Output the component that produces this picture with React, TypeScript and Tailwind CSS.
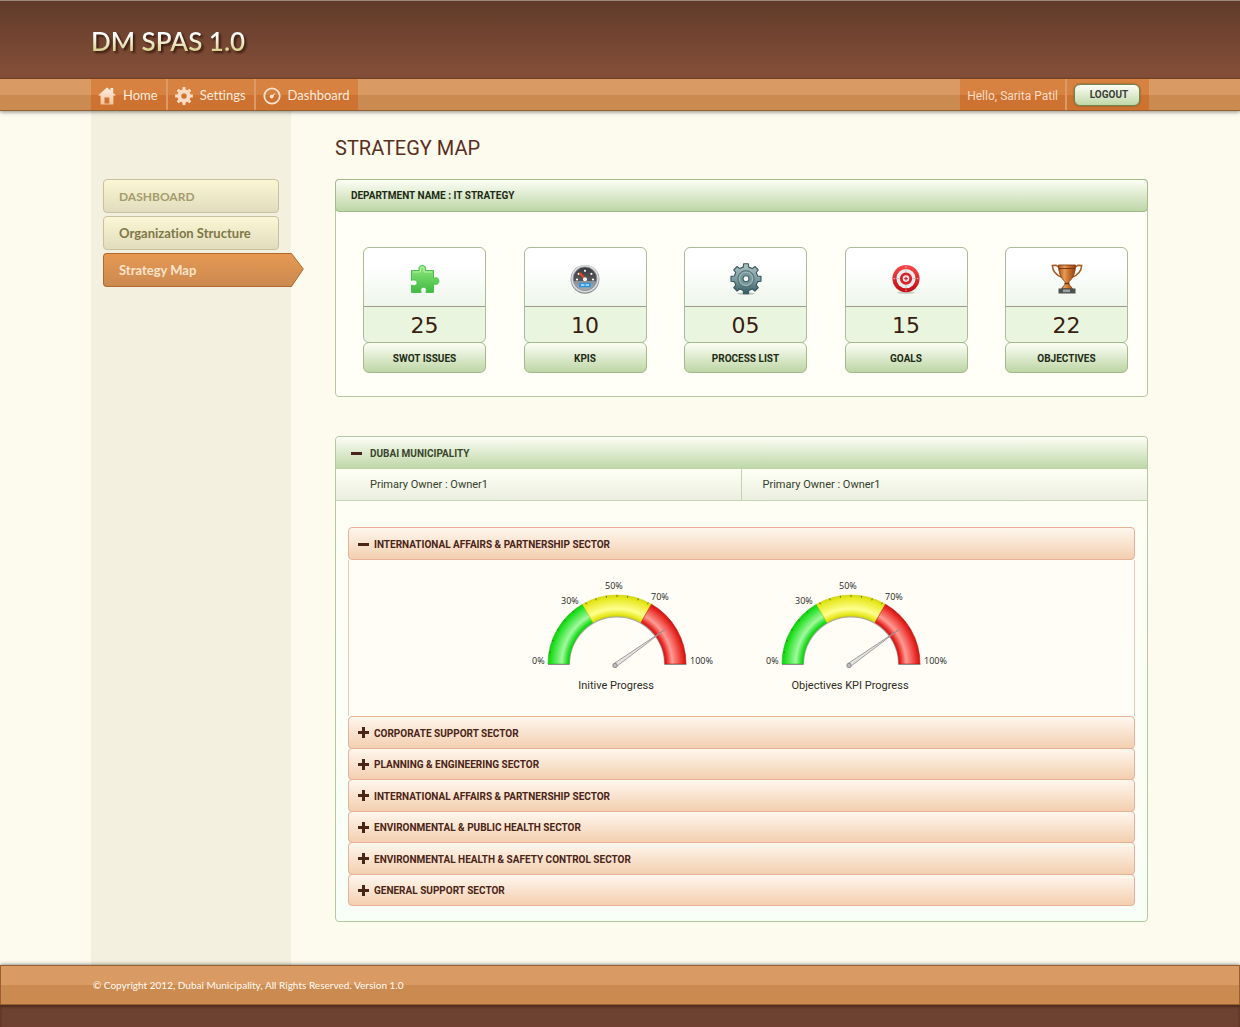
import { useState, type ReactNode } from 'react';

const stats = [
  { label: 'SWOT ISSUES', value: '25', icon: <PuzzleIcon /> },
  { label: 'KPIS', value: '10', icon: <DialIcon /> },
  { label: 'PROCESS LIST', value: '05', icon: <CogIcon /> },
  { label: 'GOALS', value: '15', icon: <TargetIcon /> },
  { label: 'OBJECTIVES', value: '22', icon: <TrophyIcon /> },
];

const sectors = [
  'CORPORATE SUPPORT SECTOR',
  'PLANNING & ENGINEERING SECTOR',
  'INTERNATIONAL AFFAIRS & PARTNERSHIP SECTOR',
  'ENVIRONMENTAL & PUBLIC HEALTH SECTOR',
  'ENVIRONMENTAL HEALTH & SAFETY CONTROL SECTOR',
  'GENERAL SUPPORT SECTOR',
];

function gearPath(cx: number, cy: number, teeth: number, outer: number, inner: number) {
  const step = (Math.PI * 2) / teeth;
  const pts: string[] = [];
  for (let i = 0; i < teeth; i++) {
    const a = i * step - Math.PI / 2;
    const corners = [
      [inner, -0.3],
      [outer, -0.2],
      [outer, 0.2],
      [inner, 0.3],
    ];
    corners.forEach(([r, t]) => {
      const x = cx + r * Math.cos(a + t * step);
      const y = cy + r * Math.sin(a + t * step);
      pts.push(`${x.toFixed(2)} ${y.toFixed(2)}`);
    });
  }
  return `M${pts.join('L')}Z`;
}

function HomeIcon() {
  return (
    <svg width="18" height="18" viewBox="0 0 18 18" aria-hidden="true">
      <defs>
        <linearGradient id="home" x1="0" y1="0" x2="0" y2="1">
          <stop offset="0" stopColor="#fff0e4" />
          <stop offset="1" stopColor="#f3c09a" />
        </linearGradient>
      </defs>
      <path
        d="M9 0.5L0 8.6h2.6V17.5h12.8V8.6H18l-2.8-2.5V1h-2.8v2.5zM6.5 10.5h4.8v6H6.5z"
        fill="url(#home)"
        fillRule="evenodd"
      />
    </svg>
  );
}

function SettingsIcon() {
  return (
    <svg width="18" height="18" viewBox="0 0 18 18" aria-hidden="true">
      <path
        d={`${gearPath(9, 9, 8, 9, 6.6)}M9 6.3a2.7 2.7 0 1 0 0 5.4a2.7 2.7 0 1 0 0-5.4Z`}
        fill="#fadcc4"
        fillRule="evenodd"
      />
    </svg>
  );
}

function MeterIcon() {
  return (
    <svg width="18" height="18" viewBox="0 0 18 18" aria-hidden="true">
      <circle cx="9" cy="9" r="7.7" fill="none" stroke="#fbe3d0" strokeWidth="1.8" />
      <circle cx="8.6" cy="9.6" r="1.9" fill="#fbe3d0" />
      <path d="M8.2 8.8L12.6 5.8L9.6 10.4Z" fill="#fbe3d0" />
    </svg>
  );
}

function PuzzleIcon() {
  return (
    <svg width="30" height="30" viewBox="0 0 30 30" aria-hidden="true">
      <defs>
        <linearGradient id="puzzle" x1="0" y1="0" x2="0" y2="1">
          <stop offset="0" stopColor="#8fe97d" />
          <stop offset="1" stopColor="#3fba41" />
        </linearGradient>
      </defs>
      <path
        d="M1.5 6.5H9V5c-1.3-3.6 6.5-5.4 6.6-.7L15.4 6.5H23.5v7.6h1.3c4.8-2 5.6 6.3 1.2 6.2l-2.5-.4v8.6h-7.6c.9-2.6.6-5.3-2.3-5.2c-3 .1-3.4 2.5-2.4 5.2H1.5v-7.4c2.6.8 5.7.4 5.6-2.5c-.1-2.8-3-3.1-5.6-2.2z"
        fill="url(#puzzle)"
        stroke="#4cc04c"
        strokeWidth="1"
      />
      <path d="M3 8h7.4V5.2C10.4 2.4 14 2.6 14 4.6V8h8" fill="none" stroke="#c4f7b8" strokeWidth="0.8" />
    </svg>
  );
}

function DialIcon() {
  const marks = [
    [7, 15.5],
    [8.6, 9.8],
    [15, 6.8],
    [21.4, 9.8],
    [23, 15.5],
  ];
  return (
    <svg width="30" height="30" viewBox="0 0 30 30" aria-hidden="true">
      <defs>
        <linearGradient id="dial" x1="0" y1="0" x2="0" y2="1">
          <stop offset="0" stopColor="#38393d" />
          <stop offset="0.6" stopColor="#58595e" />
          <stop offset="0.61" stopColor="#8d8f95" />
          <stop offset="1" stopColor="#a9abb0" />
        </linearGradient>
      </defs>
      <circle cx="15" cy="15.3" r="14.4" fill="#8b8c90" />
      <circle cx="15" cy="14.8" r="13.8" fill="#dcdde0" />
      <circle cx="15" cy="14.8" r="11.8" fill="url(#dial)" stroke="#85878c" strokeWidth="0.8" />
      {marks.map(([x, y]) => (
        <circle key={x} cx={x} cy={y} r="1.1" fill="#fff" />
      ))}
      <path d="M10 9.2L15 14.6" stroke="#f0431d" strokeWidth="2" strokeLinecap="round" />
      <circle cx="15" cy="15.2" r="2" fill="#fff" />
      <rect x="9" y="18.7" width="12" height="4.6" rx="0.5" fill="#2e95e6" />
      <path d="M11 21h3.4M15.6 21H19" stroke="#bfe6ff" strokeWidth="1.6" />
    </svg>
  );
}

function CogIcon() {
  return (
    <svg width="32" height="32" viewBox="0 0 32 32" aria-hidden="true">
      <defs>
        <linearGradient id="cog" x1="0" y1="0" x2="0" y2="1">
          <stop offset="0" stopColor="#adc0c2" />
          <stop offset="0.55" stopColor="#7d9b9f" />
          <stop offset="1" stopColor="#2f5960" />
        </linearGradient>
      </defs>
      <ellipse cx="16" cy="30.6" rx="9" ry="1.2" fill="#b9c4bf" />
      <path
        d={gearPath(16, 15.8, 8, 15.2, 12)}
        fill="url(#cog)"
        stroke="#36575c"
        strokeWidth="1.1"
        strokeLinejoin="round"
      />
      <circle cx="16" cy="15.8" r="8.2" fill="#78979b" stroke="#4a6c71" strokeWidth="0.9" />
      <circle cx="16" cy="15.8" r="6.6" fill="none" stroke="#a5bbbd" strokeWidth="1" />
      <circle cx="16" cy="15.8" r="3" fill="#fff" stroke="#3d6267" strokeWidth="1.1" />
    </svg>
  );
}

function TargetIcon() {
  return (
    <svg width="30" height="30" viewBox="0 0 30 30" aria-hidden="true">
      <defs>
        <linearGradient id="target" x1="0" y1="0" x2="0" y2="1">
          <stop offset="0" stopColor="#f9494a" />
          <stop offset="1" stopColor="#bd0d14" />
        </linearGradient>
      </defs>
      <ellipse cx="15" cy="28.6" rx="9" ry="1.2" fill="#c5cac2" />
      <circle cx="15" cy="14.6" r="13.6" fill="url(#target)" />
      <circle cx="15" cy="14.6" r="9.6" fill="#e9ecec" />
      <circle cx="15" cy="14.6" r="4.7" fill="none" stroke="#d92328" strokeWidth="2.8" />
      <path d="M15 12.8v3.6M13.2 14.6h3.6" stroke="#d92328" strokeWidth="1.2" />
      <path
        d="M15 5.6v2.8M15 20.8v2.8M6 14.6h2.8M21.2 14.6H24"
        stroke="#b9bcbc"
        strokeWidth="0.8"
      />
      <path d="M15 2.2v1.6M15 25.6v1.6M2.6 14.6h1.6M25.8 14.6h1.6" stroke="#ffb5b0" strokeWidth="1" />
    </svg>
  );
}

function TrophyIcon() {
  return (
    <svg width="32" height="30" viewBox="0 0 32 30" aria-hidden="true">
      <defs>
        <linearGradient id="cup" x1="0" y1="0" x2="1" y2="0">
          <stop offset="0" stopColor="#a9581d" />
          <stop offset="0.35" stopColor="#e79a55" />
          <stop offset="0.6" stopColor="#c9712b" />
          <stop offset="1" stopColor="#8e4413" />
        </linearGradient>
      </defs>
      <path
        d="M8 3.4L5 1.2L1.3 1.4c.3 4.8 3.6 9.6 9.6 12M24 3.4l3-2.2l3.7.2c-.3 4.8-3.6 9.6-9.6 12"
        fill="none"
        stroke="#a65a24"
        strokeWidth="1.5"
      />
      <path
        d="M7.5 1h17c0 7.2-2.3 13-6.6 16.8l-.4 2l4 4.7h-11l4-4.7l-.4-2C9.8 14 7.5 8.2 7.5 1z"
        fill="url(#cup)"
        stroke="#843f12"
        strokeWidth="0.9"
      />
      <path d="M8 4.5h16" stroke="#7c3a10" strokeWidth="1" />
      <path d="M13.5 19.5h5" stroke="#6d300b" strokeWidth="1.4" />
      <rect x="7.5" y="24.5" width="17" height="5" fill="#4c5350" />
      <rect x="12" y="25.5" width="7" height="2.6" fill="#9aa5a2" />
    </svg>
  );
}

const CX = 85;
const CY = 86;

function polar(r: number, deg: number) {
  const a = (deg * Math.PI) / 180;
  return [CX + r * Math.cos(a), CY - r * Math.sin(a)];
}

function band(from: number, to: number) {
  const [x1, y1] = polar(69, from);
  const [x2, y2] = polar(69, to);
  const [x3, y3] = polar(48, to);
  const [x4, y4] = polar(48, from);
  return `M${x1} ${y1}A69 69 0 0 1 ${x2} ${y2}L${x3} ${y3}A48 48 0 0 0 ${x4} ${y4}Z`;
}

function Gauge({ id, title }: { id: string; title: string }) {
  const bands = [
    { name: 'green', from: 180, to: 120, edge: '#14c914', mid: '#1fe01f', light: '#a4f8a0' },
    { name: 'yellow', from: 120, to: 60, edge: '#d3d60c', mid: '#e6e81c', light: '#ffff8e' },
    { name: 'red', from: 60, to: 0, edge: '#cb1414', mid: '#e8241f', light: '#ff9c94' },
  ];
  const ticks = [170, 160, 150, 140, 130, 117, 108, 99, 90, 81, 72, 63, 50, 40, 30, 20, 10];

  return (
    <figure className="w-[184px]">
      <svg width="184" height="96" viewBox="0 0 184 96" role="img" aria-label={title}>
        <defs>
          {bands.map((b) => (
            <radialGradient
              key={b.name}
              id={`${id}-${b.name}`}
              gradientUnits="userSpaceOnUse"
              cx={CX}
              cy={CY}
              r="69"
            >
              <stop offset="0.69" stopColor={b.edge} />
              <stop offset="0.72" stopColor={b.mid} />
              <stop offset="0.8" stopColor={b.light} />
              <stop offset="0.96" stopColor={b.mid} />
              <stop offset="1" stopColor={b.edge} />
            </radialGradient>
          ))}
        </defs>
        <path d="M37 86.5A48 48 0 0 1 133 86.5" fill="none" stroke="#a9a9a4" strokeWidth="2" />
        {bands.map((b) => (
          <path
            key={b.name}
            d={band(b.from, b.to)}
            fill={`url(#${id}-${b.name})`}
            stroke={b.edge}
            strokeWidth="0.6"
          />
        ))}
        {ticks.map((t) => {
          const [x1, y1] = polar(69, t);
          const [x2, y2] = polar(67, t);
          return <line key={t} x1={x1} y1={y1} x2={x2} y2={y2} stroke="#4c5a1c" strokeWidth="0.8" />;
        })}
        <path d="M16 86.5h21.5M132.5 86.5h22" stroke="#8d8d88" strokeWidth="1" />
        <path d="M82 85.5L133 51.5L84.5 88.5Z" fill="#e2e2e0" stroke="#8a8a8a" strokeWidth="0.8" />
        <circle cx="83" cy="87.5" r="2.2" fill="#bcbcbc" stroke="#7c7c7c" strokeWidth="0.8" />
        <g fontFamily="'Open Sans', sans-serif" fontSize="9" fill="#1d1d1d">
          <text x="0" y="86">0%</text>
          <text x="29" y="26">30%</text>
          <text x="73" y="11">50%</text>
          <text x="119" y="22">70%</text>
          <text x="158" y="86">100%</text>
        </g>
      </svg>
      <figcaption className="mt-1 pr-4 text-center text-[11px] leading-4 whitespace-nowrap text-[#2b2b22]">
        {title}
      </figcaption>
    </figure>
  );
}

function ToggleIcon({ open }: { open: boolean }) {
  return (
    <svg width="11" height="11" viewBox="0 0 11 11" className="shrink-0" aria-hidden="true">
      <path d={open ? 'M0 4h11v3H0z' : 'M0 4h4V0h3v4h4v3H7v4H4V7H0z'} fill="#4a2416" />
    </svg>
  );
}

function SectorHeader({ title, open, onClick }: { title: string; open: boolean; onClick?: () => void }) {
  return (
    <button
      type="button"
      aria-expanded={open}
      onClick={onClick}
      className="flex h-full min-h-8 w-full items-center gap-[5px] rounded border border-[#e6b196] bg-linear-to-b from-[#fef7ee] to-[#f3cfb0] px-[9px] pt-px text-left text-[10px] font-bold text-[#4a2416]"
    >
      <ToggleIcon open={open} />
      <span className="pt-px">{title}</span>
    </button>
  );
}

function NavItem({ icon, children }: { icon: ReactNode; children: ReactNode }) {
  return (
    <li className="border-r-2 border-[#dc9a66] last:border-r-0">
      <a
        href="#"
        className="flex h-full items-center gap-[7px] bg-[linear-gradient(#d78240_50%,#cd7231_50%)] pt-0.5 pr-2 pl-[7px] font-['Lato',sans-serif] text-[13px] text-[#fdebdd] [font-variant-ligatures:none]"
      >
        {icon}
        {children}
      </a>
    </li>
  );
}

export default function App() {
  const [municipalityOpen, setMunicipalityOpen] = useState(true);
  const [affairsOpen, setAffairsOpen] = useState(true);

  return (
    <div className="flex min-h-screen flex-col bg-[#fdfbee] font-['Roboto','Open_Sans',sans-serif]">
      <header className="relative">
        <div className="h-[78px] border-t border-[#9b877c] bg-linear-to-b from-[#603b2a] to-[#865039]">
          <div className="mx-auto w-full max-w-[1058px] pt-5">
            <div className="w-max bg-linear-to-b from-white from-35% to-[#d9d08f] to-75% bg-clip-text font-['Lato',sans-serif] text-[26px] leading-10 font-semibold text-transparent drop-shadow-[2px_2px_1px_#3a1a0e]">
              DM SPAS 1.0
            </div>
          </div>
        </div>

        {/* Top navigation */}
        <div className="border-t border-b border-t-[#74421f] border-b-[#96602f] bg-[linear-gradient(#d99a64_50%,#cb8b50_50%)] shadow-[0_1px_4px_rgba(60,60,60,0.6)]">
          <div className="mx-auto flex h-[31px] w-full max-w-[1058px] justify-between">
            <nav>
              <ul className="flex h-full">
                <NavItem icon={<HomeIcon />}>Home</NavItem>
                <NavItem icon={<SettingsIcon />}>Settings</NavItem>
                <NavItem icon={<MeterIcon />}>Dashboard</NavItem>
              </ul>
            </nav>
            <div className="flex bg-[linear-gradient(#d78240_50%,#cd7231_50%)]">
              <div className="flex items-center border-r-2 border-[#dc9a66] px-[7px] pt-0.5 text-[12px] text-[#fbdcc5]">
                Hello, Sarita Patil
              </div>
              <div className="flex items-center pr-[9px] pl-[7px]">
                <button
                  type="button"
                  className="h-[22px] w-[66px] rounded-md border border-[#74844f] bg-linear-to-b from-[#fdfef6] to-[#c0d8a8] pl-1 text-[10px] font-bold text-[#3b3f3a] shadow-[0_0_2px_#5c5a2c]"
                >
                  LOGOUT
                </button>
              </div>
            </div>
          </div>
        </div>
      </header>

      <div className="mx-auto flex w-full max-w-[1058px] flex-1">
        {/* Sidebar */}
        <aside className="w-[200px] shrink-0 bg-[#f3f0df] pt-[68px] pl-3">
          <ul className="flex w-[176px] flex-col gap-[3px] font-['Lato',sans-serif] text-[13px] font-bold [font-variant-ligatures:none]">
            <li>
              <a
                href="#"
                className="flex h-[34px] items-center rounded border border-[#c5c2a2] bg-linear-to-b from-[#fbf7d4] to-[#e1dcbd] px-[15px] pt-0.5 text-[12px] text-[#a39c6c]"
              >
                DASHBOARD
              </a>
            </li>
            <li>
              <a
                href="#"
                className="flex h-[34px] items-center rounded border border-[#c5c2a2] bg-linear-to-b from-[#fbf7d4] to-[#e1dcbd] px-[15px] pt-px text-[#7e7846]"
              >
                Organization Structure
              </a>
            </li>
            <li>
              <a href="#" aria-current="page" className="flex h-[34px] w-[201px] text-[#fde3c9]">
                <span className="flex flex-1 items-center rounded-l border border-r-0 border-[#b06a30] bg-linear-to-b from-[#e69853] to-[#cb8a50] px-[15px] pt-px">
                  Strategy Map
                </span>
                <svg width="13" height="34" viewBox="0 0 13 34" className="shrink-0" aria-hidden="true">
                  <defs>
                    <linearGradient id="tip" x1="0" y1="0" x2="0" y2="1">
                      <stop offset="0" stopColor="#e69853" />
                      <stop offset="1" stopColor="#cb8a50" />
                    </linearGradient>
                  </defs>
                  <path d="M0 .5H.5L12.3 16L.5 33.5H0" fill="url(#tip)" stroke="#b06a30" />
                </svg>
              </a>
            </li>
          </ul>
        </aside>

        <main className="mr-px ml-11 min-w-0 flex-1 pt-[22px] pb-[43px]">
          <h1 className="text-[20px] leading-[30px] text-[#5a2e1c]">STRATEGY MAP</h1>

          {/* Department summary */}
          <section className="mt-4 rounded border border-[#b4c9a1] bg-[#fffff8]">
            <h2 className="-mx-px -mt-px flex h-[33px] items-center rounded border border-[#a3ba8b] bg-linear-to-b from-[#fdfef6] to-[#bdd6a5] px-[15px] text-[10px] font-bold text-[#1d2b14]">
              DEPARTMENT NAME : IT STRATEGY
            </h2>
            <ul className="flex justify-between pt-[35px] pr-[19px] pb-[23px] pl-[27px]">
              {stats.map((s) => (
                <li key={s.label} className="w-[123px] text-center">
                  <div className="rounded-md border border-[#a9be98] bg-[#e9f5df]">
                    <div className="flex h-[59px] items-center justify-center rounded-t-md border-b border-[#a09a8c] bg-linear-to-b from-white from-30% to-[#eef6ea] pt-1">
                      {s.icon}
                    </div>
                    <div className="h-[35px] pt-px font-['DejaVu_Sans',sans-serif] text-[22px] leading-9 text-[#3a1d12]">
                      {s.value}
                    </div>
                  </div>
                  <div className="-mt-px flex h-[31px] items-center justify-center rounded-md border border-[#a3ba8b] bg-linear-to-b from-[#fdfef6] to-[#bdd6a5] pt-px text-[10px] font-bold text-[#1d2b14]">
                    {s.label}
                  </div>
                </li>
              ))}
            </ul>
          </section>

          {/* Municipality */}
          <section className="mt-[39px] rounded border border-[#b4c9a1] bg-linear-to-b from-[#fffef3] to-[#f8fff7]">
            <button
              type="button"
              aria-expanded={municipalityOpen}
              onClick={() => setMunicipalityOpen(!municipalityOpen)}
              className="flex h-8 w-full items-center gap-[8px] rounded-t bg-linear-to-b from-[#fdfef6] to-[#bdd6a5] px-[15px] text-left text-[10px] font-bold text-[#38472c]"
            >
              <ToggleIcon open={municipalityOpen} />
              DUBAI MUNICIPALITY
            </button>
            {municipalityOpen && (
              <>
                <div className="grid h-8 grid-cols-2 items-stretch border-b border-[#c6d6b4] bg-linear-to-b from-[#fffff6] to-[#ebefdf] text-[11px] text-[#33402a]">
                  <div className="flex items-center border-r border-[#c0d4ac] pt-0.5 pl-[34px]">
                    Primary Owner : Owner1
                  </div>
                  <div className="flex items-center pt-0.5 pl-[21px]">Primary Owner : Owner1</div>
                </div>

                <div className="px-3 pt-[26px] pb-4">
                  <div className="h-[33px]">
                    <SectorHeader
                      title="INTERNATIONAL AFFAIRS & PARTNERSHIP SECTOR"
                      open={affairsOpen}
                      onClick={() => setAffairsOpen(!affairsOpen)}
                    />
                  </div>
                  {affairsOpen && (
                    <div className="flex justify-center gap-[50px] border-x border-[#ecc9b5] bg-[#fffdf5] pt-[18px] pr-px pb-[22px]">
                      <Gauge id="initive" title="Initive Progress" />
                      <Gauge id="objectives" title="Objectives KPI Progress" />
                    </div>
                  )}
                  <ul className="grid h-[189px] grid-rows-6">
                    {sectors.map((s) => (
                      <li key={s} className="-mb-px">
                        <SectorHeader title={s} open={false} />
                      </li>
                    ))}
                  </ul>
                </div>
              </>
            )}
          </section>
        </main>
      </div>

      <footer className="relative">
        <div className="border border-[#96602f] bg-[linear-gradient(#d99a64_50%,#cb8b50_50%)] shadow-[0_0_4px_rgba(40,30,30,0.7)]">
          <div className="mx-auto flex h-[38px] w-full max-w-[1058px] items-center px-0.5 font-['Lato',sans-serif] text-[10px] font-medium text-[#fff6ec]">
            © Copyright 2012, Dubai Municipality, All Rights Reserved. Version 1.0
          </div>
        </div>
        <div className="h-[22px] bg-[#6e4231] shadow-[inset_0_2px_3px_#4e2a1d]" />
      </footer>
    </div>
  );
}
